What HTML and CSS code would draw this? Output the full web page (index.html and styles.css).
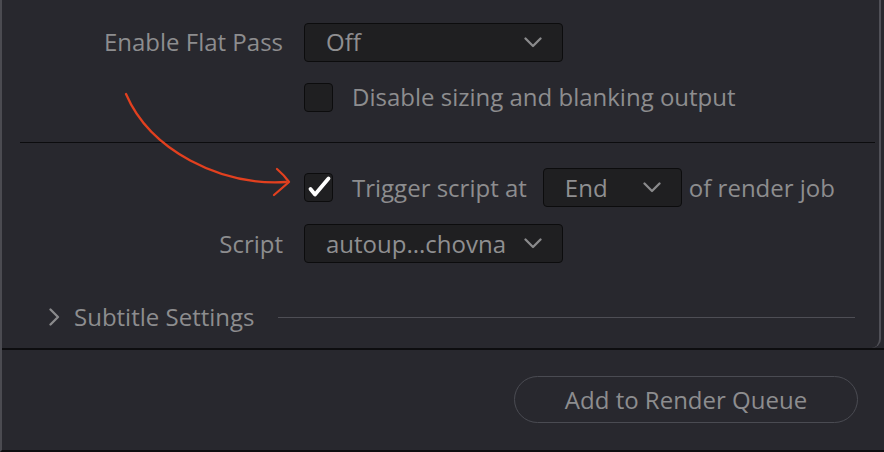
FILE: index.html
```html
<!DOCTYPE html>
<html lang="en">
<head>
<meta charset="utf-8">
<title>Render Settings</title>
<link rel="stylesheet" href="styles.css">
</head>
<body>
<div class="window">
  <div class="settings">
    <div class="scroll">
      <div class="form-row row-top">
        <div class="label">Enable Flat Pass</div>
        <div class="control">
          <div class="select select-wide">
            <span class="select-value">Off</span>
            <svg class="chev" width="18" height="11" viewBox="0 0 18 11"><polyline points="1.5,1.5 9,9 16.5,1.5"/></svg>
          </div>
        </div>
      </div>

      <div class="form-row row-check">
        <div class="label"></div>
        <div class="control">
          <span class="checkbox"></span>
          <span class="text check-text">Disable sizing and blanking output</span>
        </div>
      </div>

      <div class="divider"></div>

      <div class="form-row row-trigger">
        <div class="label"></div>
        <div class="control">
          <span class="checkbox checked">
            <svg width="29" height="29" viewBox="0 0 29 29"><path d="M6.5 16 L11 21.5 L24.5 5.5"/></svg>
          </span>
          <span class="text check-text">Trigger script at</span>
          <div class="select select-small">
            <span class="select-value">End</span>
            <svg class="chev" width="18" height="11" viewBox="0 0 18 11"><polyline points="1.5,1.5 9,9 16.5,1.5"/></svg>
          </div>
          <span class="text after-text">of render job</span>
        </div>
      </div>

      <div class="form-row row-script">
        <div class="label">Script</div>
        <div class="control">
          <div class="select select-wide">
            <span class="select-value">autoup...chovna</span>
            <svg class="chev" width="18" height="11" viewBox="0 0 18 11"><polyline points="1.5,1.5 9,9 16.5,1.5"/></svg>
          </div>
        </div>
      </div>

      <div class="section-head">
        <svg class="section-chev" width="11" height="18" viewBox="0 0 11 18"><polyline points="1.5,1.5 9,9 1.5,16.5"/></svg>
        <span class="text">Subtitle Settings</span>
        <span class="section-line"></span>
      </div>
    </div>
  </div>

  <div class="footer">
    <button class="queue-btn">Add to Render Queue</button>
  </div>

  <svg class="annotation" width="884" height="452" viewBox="0 0 884 452">
    <path d="M126 94 C 150 150, 220 186, 286 182"/>
    <path d="M277 169 Q 284 175 289 182 Q 281 189 274 195"/>
  </svg>
</div>
</body>
</html>
```
FILE: styles.css
```css
* { box-sizing: border-box; }

html, body {
  margin: 0;
  padding: 0;
  background: #28282e;
}

body {
  width: 884px;
  height: 452px;
  overflow: hidden;
  font-family: "Open Sans", "Noto Sans", sans-serif;
  font-size: 24px;
  color: #8d8d8f;
}

.window {
  position: relative;
  width: 884px;
  height: 452px;
  border-left: 2px solid #4b4b51;
  border-bottom: 2px solid #0e0e10;
  display: flex;
  flex-direction: column;
}

.settings {
  height: 350px;
  border-bottom: 2px solid #0d0d0f;
  padding-right: 3px;
  display: flex;
}

.scroll {
  flex: 1;
  border-right: 2px solid #505057;
  border-bottom-right-radius: 9px;
  padding-top: 22px;
  display: flex;
  flex-direction: column;
}

.form-row {
  display: grid;
  grid-template-columns: 281px 1fr;
  column-gap: 21px;
  align-items: center;
}

.label {
  text-align: right;
  line-height: 30px;
  white-space: nowrap;
}

.control {
  display: flex;
  align-items: center;
  line-height: 30px;
  white-space: nowrap;
}

.row-top { height: 40px; }
.row-check { height: 29px; margin-top: 20px; }
.row-trigger { height: 39px; margin-top: 25px; }
.row-script { height: 39px; margin-top: 17px; }

.divider {
  height: 1px;
  background: #0c0c0e;
  margin: 31px 4px 0 18px;
}

.select {
  height: 39px;
  background: #1f1f21;
  border: 1.5px solid #0c0c0d;
  border-radius: 4px;
  display: flex;
  align-items: center;
  justify-content: space-between;
  padding: 0 20px 0 21px;
}

.select-wide { width: 259px; }
.select-small { width: 139px; margin-left: 16px; }

.select-value { color: #8f8f91; }

.chev polyline,
.section-chev polyline {
  fill: none;
  stroke: #8a8a8c;
  stroke-width: 2.3;
  stroke-linecap: round;
  stroke-linejoin: round;
}

.checkbox {
  width: 29px;
  height: 29px;
  flex: none;
  background: #1f1f21;
  border: 1.5px solid #0c0c0d;
  border-radius: 4px;
  position: relative;
}

.checkbox svg {
  position: absolute;
  left: -1.5px;
  top: -1.5px;
}

.checkbox path {
  fill: none;
  stroke: #ffffff;
  stroke-width: 3.8;
  stroke-linecap: round;
  stroke-linejoin: round;
}

.check-text { margin-left: 19px; }
.after-text { margin-left: 7px; }

.section-head {
  margin-top: 39px;
  height: 30px;
  display: flex;
  align-items: center;
  padding-left: 47px;
  line-height: 30px;
}

.section-chev { flex: none; }

.section-head .text {
  margin-left: 14px;
  white-space: nowrap;
}

.section-line {
  flex: 1;
  height: 1px;
  background: #4e4e55;
  margin: 0 24px 0 23px;
}

.footer {
  flex: 1;
  display: flex;
  justify-content: flex-end;
  align-items: flex-start;
  padding: 26px 26px 0 0;
}

.queue-btn {
  width: 344px;
  height: 47px;
  border: 1.5px solid #4a4b52;
  border-radius: 24px;
  background: transparent;
  font-family: "Open Sans", "Noto Sans", sans-serif;
  font-size: 24px;
  color: #8d8d8f;
  padding: 0;
  line-height: 30px;
}

.annotation {
  position: absolute;
  left: -2px;
  top: 0;
  pointer-events: none;
}

.annotation path {
  fill: none;
  stroke: #e2401f;
  stroke-width: 2.3;
  stroke-linecap: round;
  stroke-linejoin: round;
}
```
